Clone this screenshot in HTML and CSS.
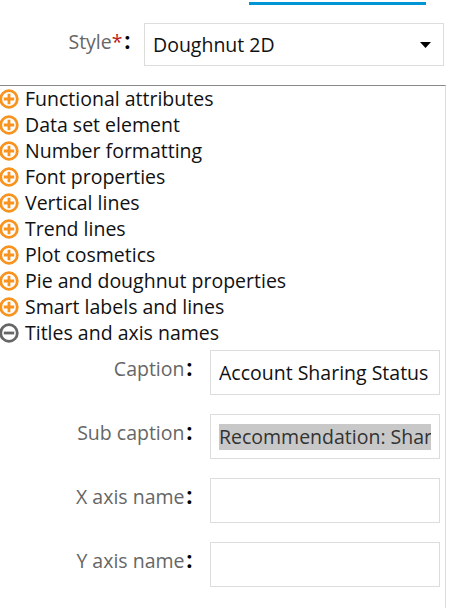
FILE: index.html
```html
<!DOCTYPE html>
<html>
<head>
<meta charset="utf-8">
<link rel="stylesheet" href="styles.css">
</head>
<body>
<div class="tabs"><div class="tab-active"></div></div>
<div class="style-row">
  <label class="style-label">Style<span class="req">*</span><span class="colon">：</span></label>
  <div class="select">
    <span class="select-text">Doughnut 2D</span>
    <svg class="caret" width="11" height="6" viewBox="0 0 11 6"><path d="M0 0H11L5.5 6Z" fill="#000"/></svg>
  </div>
</div>
<div class="panel">
  <ul class="groups">
    <li class="group"><svg class="ico" viewBox="0 0 20 20"><circle cx="10" cy="10" r="8.3" fill="none" stroke="#f7931e" stroke-width="2.8"/><path d="M4.8 10H15.2M10 4.8V15.2" stroke="#f7931e" stroke-width="2.8"/></svg><span>Functional attributes</span></li>
    <li class="group"><svg class="ico" viewBox="0 0 20 20"><circle cx="10" cy="10" r="8.3" fill="none" stroke="#f7931e" stroke-width="2.8"/><path d="M4.8 10H15.2M10 4.8V15.2" stroke="#f7931e" stroke-width="2.8"/></svg><span>Data set element</span></li>
    <li class="group"><svg class="ico" viewBox="0 0 20 20"><circle cx="10" cy="10" r="8.3" fill="none" stroke="#f7931e" stroke-width="2.8"/><path d="M4.8 10H15.2M10 4.8V15.2" stroke="#f7931e" stroke-width="2.8"/></svg><span>Number formatting</span></li>
    <li class="group"><svg class="ico" viewBox="0 0 20 20"><circle cx="10" cy="10" r="8.3" fill="none" stroke="#f7931e" stroke-width="2.8"/><path d="M4.8 10H15.2M10 4.8V15.2" stroke="#f7931e" stroke-width="2.8"/></svg><span>Font properties</span></li>
    <li class="group"><svg class="ico" viewBox="0 0 20 20"><circle cx="10" cy="10" r="8.3" fill="none" stroke="#f7931e" stroke-width="2.8"/><path d="M4.8 10H15.2M10 4.8V15.2" stroke="#f7931e" stroke-width="2.8"/></svg><span>Vertical lines</span></li>
    <li class="group"><svg class="ico" viewBox="0 0 20 20"><circle cx="10" cy="10" r="8.3" fill="none" stroke="#f7931e" stroke-width="2.8"/><path d="M4.8 10H15.2M10 4.8V15.2" stroke="#f7931e" stroke-width="2.8"/></svg><span>Trend lines</span></li>
    <li class="group"><svg class="ico" viewBox="0 0 20 20"><circle cx="10" cy="10" r="8.3" fill="none" stroke="#f7931e" stroke-width="2.8"/><path d="M4.8 10H15.2M10 4.8V15.2" stroke="#f7931e" stroke-width="2.8"/></svg><span>Plot cosmetics</span></li>
    <li class="group"><svg class="ico" viewBox="0 0 20 20"><circle cx="10" cy="10" r="8.3" fill="none" stroke="#f7931e" stroke-width="2.8"/><path d="M4.8 10H15.2M10 4.8V15.2" stroke="#f7931e" stroke-width="2.8"/></svg><span>Pie and doughnut properties</span></li>
    <li class="group"><svg class="ico" viewBox="0 0 20 20"><circle cx="10" cy="10" r="8.3" fill="none" stroke="#f7931e" stroke-width="2.8"/><path d="M4.8 10H15.2M10 4.8V15.2" stroke="#f7931e" stroke-width="2.8"/></svg><span>Smart labels and lines</span></li>
    <li class="group"><svg class="ico" viewBox="0 0 20 20"><circle cx="10" cy="10" r="8.3" fill="none" stroke="#666" stroke-width="2.8"/><path d="M4.8 10H15.2" stroke="#666" stroke-width="2.8"/></svg><span>Titles and axis names</span></li>
  </ul>
  <div class="fields">
    <div class="field"><label class="flabel">Caption<span class="colon">：</span></label><div class="input"><div class="clip"><span class="val">Account Sharing Status</span></div></div></div>
    <div class="field"><label class="flabel">Sub caption<span class="colon">：</span></label><div class="input"><div class="clip"><span class="val sel">Recommendation: Sharing</span></div></div></div>
    <div class="field"><label class="flabel">X axis name<span class="colon">：</span></label><div class="input"></div></div>
    <div class="field"><label class="flabel">Y axis name<span class="colon">：</span></label><div class="input"></div></div>
  </div>
</div>
</body>
</html>
```
FILE: styles.css
```css
html, body { margin: 0; padding: 0; background: #fff; }
body { font-family: "Open Sans", "Noto Sans", sans-serif; font-size: 19.5px; color: #111; width: 455px; height: 608px; overflow: hidden; }
.tabs { height: 23px; padding-top: 2px; box-sizing: border-box; }
.tab-active { margin-left: 249px; width: 177px; height: 3px; background: #0096d6; }
.style-row { display: flex; align-items: flex-start; height: 62px; }
.style-label { width: 142px; text-align: right; color: #666; line-height: 35px; margin-right: 2px; white-space: nowrap; }
.req { color: #b22; }
.colon { font-family: "Noto Sans CJK SC", sans-serif; color: #000; font-weight: bold; }
.select { width: 300px; height: 43px; box-sizing: border-box; border: 1px solid #ddd; display: flex; align-items: center; justify-content: space-between; padding: 0 12px 0 8px; }
.select-text { color: #111; }
.caret { display: block; }
.panel { width: 446px; box-sizing: border-box; border-top: 1px solid #888; border-right: 1px solid #ddd; height: 523px; }
.groups { list-style: none; margin: 0; padding: 0; }
.group { display: flex; align-items: center; height: 26px; line-height: 24px; white-space: nowrap; }
.ico { width: 20px; height: 20px; margin-left: -1px; margin-right: 6px; flex: none; }
.fields { padding-top: 4px; }
.field { display: flex; align-items: flex-start; margin-bottom: 19px; }
.flabel { width: 204px; text-align: right; color: #666; margin-right: 6px; line-height: 35px; white-space: nowrap; }
.input { width: 230px; height: 45px; box-sizing: border-box; border: 1px solid #ddd; padding: 0 8px; display: flex; align-items: center; }
.clip { flex: 1; overflow: hidden; white-space: nowrap; }
.val { color: #111; }
.sel { background: #c8c8c8; color: #333; line-height: 26px; display: inline-block; }
```
